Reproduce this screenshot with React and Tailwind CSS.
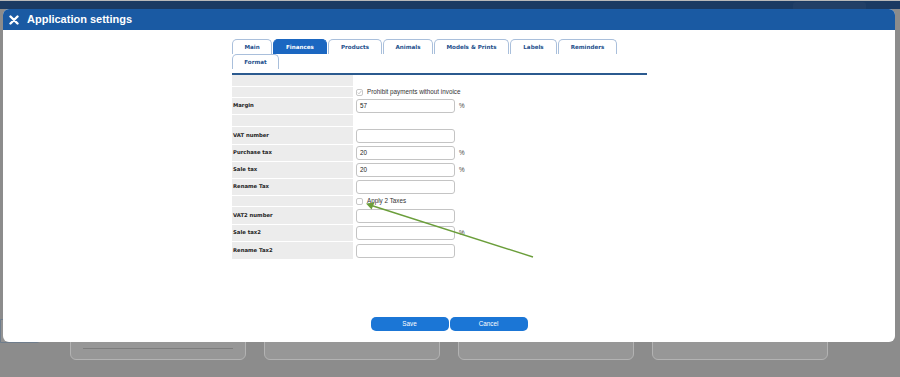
import React from 'react';

const tabs = [
  { label: 'Main', w: 'w-[40px]' },
  { label: 'Finances', w: 'w-[54px]', active: true },
  { label: 'Products', w: 'w-[54px]' },
  { label: 'Animals', w: 'w-[50px]' },
  { label: 'Models & Prints', w: 'w-[75px]' },
  { label: 'Labels', w: 'w-[47px]' },
  { label: 'Reminders', w: 'w-[59px]' },
];

const Tab = ({ label, w, active }) => (
  <div
    className={`${w} h-[15px] rounded-t-[5px] border border-b-0 flex items-center justify-center text-[5.6px] font-bold ${
      active ? 'bg-[#1b67c1] border-[#1b67c1] text-white' : 'bg-white border-[#a9bfdb] text-[#1d4f8c]'
    }`}
  >
    {label}
  </div>
);

const Input = ({ value }) => (
  <div className="w-[99px] h-[14px] rounded-[3px] border border-[#c4c4c4] bg-white flex items-center px-[3px] text-[6.3px] text-[#222]">
    {value}
  </div>
);

const Check = ({ checked }) => (
  <div className="w-[7px] h-[7px] rounded-[2px] border border-[#c8c8c8] bg-white flex items-center justify-center">
    {checked && (
      <svg width="5" height="5" viewBox="0 0 5 5">
        <path d="M0.8 2.6 L2 3.8 L4.3 1" fill="none" stroke="#b5b5b5" strokeWidth="0.8" />
      </svg>
    )}
  </div>
);

const Row = ({ label, h, children }) => (
  <div className={`flex ${h} border-b border-white`}>
    <div className="w-[121px] bg-[#ececec] flex items-center pl-[1px] text-[5.3px] font-bold text-[#222] font-['DejaVu_Sans',Verdana,sans-serif]">
      {label}
    </div>
    <div className="flex-1 flex items-center pl-[3px] gap-[3px]">{children}</div>
  </div>
);

const Pct = () => <span className="text-[6.3px] text-[#444] ml-[1px]">%</span>;

export default function App() {
  return (
    <div className="relative w-[900px] h-[377px] overflow-hidden bg-[#8c8c8c] font-['Liberation_Sans',Arial,sans-serif]">
      {/* page behind the overlay */}
      <div className="h-[9px] bg-[#1b3a62] border-t border-[#b9b9b9] flex justify-end pr-[34px]">
        <div className="w-[73px] h-[7px] mt-[1px] rounded-t-[3px] bg-[#223f66]" />
      </div>
      <div className="flex items-end h-[351px]">
        <div className="w-[40px] h-[24px] mb-[17px] rounded-br-[3px] border border-[#6f7d8c] bg-[#939393]" />
        <div className="flex gap-[18px] ml-[30px]">
          {[0, 1, 2, 3].map((i) => (
            <div
              key={i}
              className="w-[176px] h-[40px] rounded-b-[6px] border border-[#b3b3b3] bg-[#979797] flex flex-col justify-end px-[12px] pb-[10px]"
            >
              {i === 0 && (
                <>
                  <div className="text-[5px] text-[#2c3e58] mb-[4px]">
                    <span className="text-[#222] font-bold">Lorem</span> · Animal list
                  </div>
                  <div className="h-px bg-[#7d7d7d]" />
                </>
              )}
            </div>
          ))}
        </div>
      </div>

      {/* modal */}
      <div className="absolute left-[3px] top-[9px] w-[892px] h-[333px] rounded-[6px] bg-white flex flex-col overflow-hidden">
        <div className="h-[21px] bg-[#1a5aa3] flex items-center pl-[6px] gap-[8px] text-white">
          <svg width="10" height="10" viewBox="0 0 10 10">
            <path d="M1.5 1.5 L8.5 8.5 M8.5 1.5 L1.5 8.5" stroke="white" strokeWidth="2.4" strokeLinecap="round" />
          </svg>
          <span className="text-[11px] font-bold">Application settings</span>
        </div>

        <div className="flex-1 flex flex-col font-['DejaVu_Sans',Verdana,sans-serif]">
          <div className="pl-[229px] pt-[9px] w-[644px]">
            <div className="flex gap-[1px]">
              {tabs.map((t) => (
                <Tab key={t.label} {...t} />
              ))}
            </div>
            <div className="flex">
              <Tab label="Format" w="w-[47px]" />
            </div>
            <div className="h-[2px] bg-[#2b5a8f] mt-[4px]" />

            <div className="font-['Liberation_Sans',Arial,sans-serif]">
              <Row label="" h="h-[12px]" />
              <Row label="" h="h-[11px]">
                <Check checked />
                <span className="text-[6.3px] text-[#333] ml-[1px]">Prohibit payments without invoice</span>
              </Row>
              <Row label="Margin" h="h-[17px]">
                <Input value="57" />
                <Pct />
              </Row>
              <Row label="" h="h-[12px]" />
              <Row label="VAT number" h="h-[18px]">
                <Input />
              </Row>
              <Row label="Purchase tax" h="h-[17px]">
                <Input value="20" />
                <Pct />
              </Row>
              <Row label="Sale tax" h="h-[17px]">
                <Input value="20" />
                <Pct />
              </Row>
              <Row label="Rename Tax" h="h-[17px]">
                <Input />
              </Row>
              <Row label="" h="h-[11px]">
                <Check />
                <span className="text-[6.3px] text-[#333] ml-[1px]">Apply 2 Taxes</span>
              </Row>
              <Row label="VAT2 number" h="h-[18px]">
                <Input />
              </Row>
              <Row label="Sale tax2" h="h-[17px]">
                <Input />
                <Pct />
              </Row>
              <Row label="Rename Tax2" h="h-[18px]">
                <Input />
              </Row>
            </div>
          </div>

          <div className="mt-auto mb-[11px] flex justify-center gap-[1px] font-['Liberation_Sans',Arial,sans-serif]">
            <button className="w-[78px] h-[14px] rounded-[5px] bg-[#1b76d6] text-white text-[6.3px]">Save</button>
            <button className="w-[78px] h-[14px] rounded-[5px] bg-[#1b76d6] text-white text-[6.3px]">Cancel</button>
          </div>
        </div>
      </div>

      {/* annotation arrow */}
      <svg className="absolute left-0 top-0 pointer-events-none" width="900" height="377">
        <line x1="533" y1="257" x2="370" y2="205" stroke="#6b9e3b" strokeWidth="1.4" />
        <path d="M366 203.5 L374.5 202.6 L371.6 209.6 Z" fill="#6b9e3b" />
      </svg>
    </div>
  );
}
